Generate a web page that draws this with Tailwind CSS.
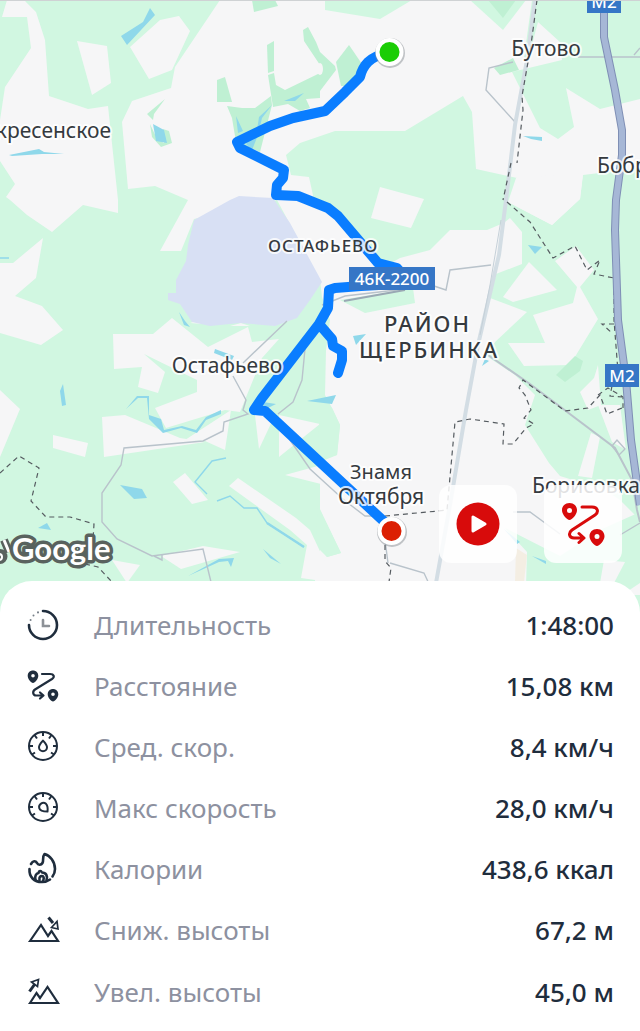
<!DOCTYPE html>
<html lang="ru">
<head>
    <meta charset="UTF-8">
    <meta name="viewport" content="width=device-width, initial-scale=1.0">
    <title>Тренировка</title>
    <script src="https://cdn.jsdelivr.net/npm/@tailwindcss/browser@4"></script>
</head>
<body class="flex min-h-screen flex-col bg-white font-['Noto_Sans','Open_Sans',sans-serif] text-[#1f2d3d]">

    <!-- Map -->
    <main class="relative border-t border-[#cfd2d4]">
        <svg class="block h-auto w-full" viewBox="0 1 640 620" role="img" aria-label="Карта маршрута">
            <rect width="640" height="622" fill="#d1f7e1"/>

            <!-- Open land -->
            <g fill="#f6f6f7">
                <path d="M7 0H24L36 12 45 40 49 96 88 109 108 106 118 200V213L83 205 52 232 27 215 10 200 6 197 15 184 0 161V120L5 87 31 48 27 17H2z"/>
                <path d="M77 41 107 46 111 83 92 95z"/>
                <path d="M130 47 160 20 179 16 190 31 172 70 149 79z"/>
                <path d="M220 0 175 67 171 88 132 101 122 122 128 189 155 186 188 200 160 251H181L194 219 277 200 320 280 322 297 330 320 326 350 325 395 332 408 340 425 337 455 320 462V510L341 553 327 557 320 550V622H640V0z"/>
                <path d="M43 238 36 278 15 296 42 306 63 330 41 345 0 333V263L13 263z"/>
                <path d="M113 334H153L172 318 208 347 248 327 252 342 279 339 262 358 240 412 225 410 166 428 155 408 197 392V380L144 354 165 372 158 393 138 387 142 367 114 369z"/>
                <path d="M190 323 200 320 203 324zM230 326 241 323 250 326zM272 326 278 320 289 321z"/>
                <path d="M0 390 20 409 0 457z"/>
                <path d="M102 417 125 415 180 438 205 442 104 457z"/>
                <path d="M53 435 88 443 85 457 53 448z"/>
                <path d="M231 410 225 450 205 441 185 440z"/>
                <path d="M255 415H275L259 449z"/>
                <path d="M279 415 320 424 300 440 279 457z"/>
                <path d="M285 475 325 464V485z"/>
                <path d="M185 473 173 482 192 504 208 500z"/>
                <path d="M238 478 296 518 310 530 325 562V622H315V580L301 578 307 545 290 530 229 486z"/>
                <path d="M203 546 240 552 181 569 161 556z"/>
                <path d="M112 560 140 565 127 583z"/>
            </g>

            <!-- Woods -->
            <g fill="#d1f7e1">
                <path d="M325 0H412L380 19 325 10z"/>
                <path d="M470 0H526L503 30z"/>
                <path d="M532 0H640V99L600 109 566 88 574 127 558 139 540 128 512 72 562 60 560 42 538 22 528 60 524 58z"/>
                <path d="M286 155 300 143 335 131H405L463 96 472 112 476 169 517 178 506 222 487 230H450L430 250 400 258 386 266 362 248 330 205 314 200 309 177 291 175z"/>
                <path d="M516 178 504 200 552 225 580 199 583 175 640 168V520L620 500 605 490 560 476 549 463 525 425 535 395 515 375 485 355 495 342 490 298 496 274 500 228z"/>
                <path d="M340 300 413 288 415 303 365 313z"/>
                <path d="M505 528 560 556 600 530 640 512V622H525L527 552z"/>
                <path d="M320 400 332 408 340 425 337 455 318 460z"/>
                <path d="M318 505 341 553 327 557 316 540z"/>
            </g>
            <g fill="#f6f6f7">
                <path d="M380 187 424 199 411 228 371 218z"/>
                <path d="M516 178 583 173 580 199 552 225 508 202z"/>
                <path d="M500 226 510 218 522 232V264L496 274 490 298 527 312 495 342 484 356 470 340 485 260z"/>
                <path d="M529 262 503 297 513 302 557 290z"/>
                <path d="M555 261 576 246 594 270 580 287 598 319 570 365 524 366 508 343H545L533 315 573 303 577 287z"/>
                <path d="M598 365 594 378 580 392 588 410 601 405z"/>
                <path d="M591 433 600 437 592 478 578 476z"/>
                <path d="M598 405 620 405 626 450 612 442z"/>
                <path d="M604 560 625 562 614 583H600z"/>
                <path d="M640 583 622 595H640z"/>
            </g>
            <path d="M516 548 527 555 524 582H515z" fill="#f4eee3"/>

            <!-- Parks -->
            <g fill="#bff0d3">
                <path d="M252 0H275L278 6 254 12z"/>
                <path d="M488 0H516L503 18z"/>
                <path d="M267 45 274 41V71L268 73z"/>
                <path d="M268 75 274 73 276 85 285 90 320 73V98L306 99 310 108 300 111 288 104 273 107z"/>
                <path d="M303 30 308 27 316 42 320 52 335 66 336 70 320 91V65L304 41z"/>
                <path d="M217 80 225 77 232 102H217z"/>
                <path d="M227 106 242 108H255L271 96 272 105 260 152 236 142 232 118z"/>
                <path d="M165 99 153 109 147 114 153 120 154 114z"/>
                <path d="M150 124 152 137 161 147 172 143 169 131 163 129 164 143 157 139z"/>
                <path d="M336 62 349 45 362 64 358 75 346 86 341 86z"/>
                <path d="M494 68 513 58 519 70 500 75z"/>
                <path d="M575 356 583 361 580 371 565 382 556 375z"/>
            </g>
            <ellipse cx="320" cy="69" rx="3" ry="6" fill="#f6f6f7"/>

            <!-- Airfield -->
            <path d="M230 200 239 196 273 198 290 223 322 282 310 300 297 318 275 326 240 323 210 326 192 322 180 304 168 300V293H176V280L186 261 188 245 194 220z" fill="#d8e0f4"/>

            <!-- Water -->
            <g fill="#8fd8ea">
                <path d="M150 8 155 15 127 45 121 36 143 22z"/>
                <path d="M9 155 39 149 44 152 64 154 42 154 12 156z"/>
                <path d="M153 124 164 130 167 143 156 141z"/>
                <path d="M272 105 259 117 257 130 246 144 252 150 258 135 262 118z"/>
                <path d="M236 116 243 131 238 133z"/>
                <path d="M284 101 304 93 295 101z"/>
                <path d="M523 136 542 137V141L531 139z"/>
                <path d="M528 245 542 247 535 254z"/>
                <path d="M353 336 366 334 356 345z"/>
                <path d="M482 366 485 359 489 361z"/>
                <path d="M179 312 185 321 190 327 184 325z"/>
                <path d="M215 349 234 356 232 360 214 353z"/>
                <path d="M63 384 66 405 62 406 60 391z"/>
                <path d="M120 485 142 489 147 498 134 499z"/>
                <path d="M38 528 47 523 51 530z"/>
                <path d="M126 409 137 396 149 396V415L161 419 164 430 182 426 196 430 206 417 221 410V414L206 420 197 433 181 428 163 433 149 419 147 398 138 398z"/>
                <path d="M263 402 276 404 268 408 258 406z"/>
                <path d="M307 401 336 395 332 404z"/>
                <path d="M188 576 219 559 234 558 231 567 228 561 219 562z"/>
                <path d="M263 549 281 564 270 558z"/>
                <path d="M532 556 546 561V564z"/>
                <path d="M504 529 520 542 517 544z"/>
            </g>
            <path d="M0 258H9M226 458 212 461 195 482 207 494M217 501 230 496 244 508H257L267 523 304 547" fill="none" stroke="#8fd8ea" stroke-width="1.4"/>
            <path d="M267 523 304 547" stroke="#8fd8ea" stroke-width="2.4"/>

            <!-- Minor roads -->
            <g fill="none" stroke="#b9c3cb" stroke-width="1.4">
                <path d="M287 321 243 363M233 376 246 400 243 410 248 414 224 422 223 431 203 441 124 448 121 465 102 493V522L117 539 152 556 203 549 211 582"/>
                <path d="M154 556 162 560V555"/>
                <path d="M305 349 302 380 293 402 278 414M290 440 310 469 344 500 365 516H382"/>
                <path d="M322 305 345 296 405 289M425 283 446 290 450 270 491 265"/>
                <path d="M578 57H640M634 55 640 48M513 62 489 68 486 90 515 122"/>
                <path d="M488 355 530 384 615 448 632 480 637 510 640 522" stroke-width="2"/>
                <path d="M612 446 617 440 625 449 619 455z"/>
                <path d="M390 563 424 573 430 586M513 512H530L560 534M640 523 620 535M385 540 388 563"/>
            </g>
            <path d="M344 301 405 290" stroke="#9aa8b4" stroke-width="2"/>

            <!-- Railway -->
            <path d="M535 0 527 60 515 125 506 200 499 255 478 345 466 410 450 505 436 583" fill="none" stroke="#d3dde4" stroke-width="4"/>
            <path d="M501 220 490 285 480 335" fill="none" stroke="#c5d0d8" stroke-width="1"/>

            <!-- District borders -->
            <g fill="none" stroke="#555b60" stroke-width="1.2" stroke-dasharray="5 4">
                <path d="M537 0 531 45 522 96 523 110 517 163M511 163 503 200"/>
                <path d="M507 202 530 222 553 258 575 246 587 270 600 260 594 274 614 278V320L618 372"/>
                <path d="M614 324H602L612 333M612 386 610 396 622 397"/>
                <path d="M0 473 19 456 39 468 31 501 46 517 70 517 94 524 93 540M85 564 98 567 112 582"/>
                <path d="M385 516 438 511 447 510 455 422 470 419 504 424 503 444 513 444 526 428 534 424 524 418 531 410 525 395 519 388 523 380 565 411 588 408 600 395 607 414 622 408"/>
                <path d="M385 545 385 561 391 568 389 582"/>
                <path d="M598 395 608 388 623 397V408"/>
            </g>

            <!-- M2 motorway -->
            <path d="M604 10V37L615 90 622 130V155L616 200 615 230 618 320 626 380 631 440 640 505" fill="none" stroke="#7f8fb5" stroke-width="8"/>
            <path d="M604 10V37L615 90 622 130V155L616 200 615 230 618 320 626 380 631 440 640 505" fill="none" stroke="#a6b7d6" stroke-width="6"/>

            <!-- Track -->
            <path d="M389 52Q374 56 368 62T360 77L345 92 325 111 293 118 270 126 237 142 240 148 284 170 283 178 277 185 276 195 298 196 328 208 338 216 378 263 397 268Q404 275 396 284L361 286 335 288 329 290 328 308 319 324 332 339 333 346 342 351V360L338 373M319 324 262 398 254 410 265 411 391 528" fill="none" stroke="#0a7dff" stroke-width="10" stroke-linecap="round" stroke-linejoin="round"/>

            <!-- Road shields -->
            <g fill="#3676c6">
                <path d="M587 0H621V13H587zM349 267H435V290H349zM605 364H639V387H605z"/>
            </g>
            <g fill="#fff" font-size="17" font-weight="500" text-anchor="middle">
                <text x="604" y="8">М2</text>
                <text x="392" y="285">46К-2200</text>
                <text x="622" y="382">М2</text>
            </g>

            <!-- Place names -->
            <g fill="#353a3f" stroke="#fff" stroke-opacity=".8" stroke-width="4" stroke-linejoin="round" paint-order="stroke" font-size="21">
                <text x="111" y="138" text-anchor="end">кресенское</text>
                <text x="546" y="56" text-anchor="middle">Бутово</text>
                <text x="597" y="173">Бобры</text>
                <text x="227" y="373" text-anchor="middle">Остафьево</text>
                <text x="381" y="479" font-size="20" text-anchor="middle">Знамя</text>
                <text x="381" y="504" text-anchor="middle">Октября</text>
                <text x="532" y="493">Борисовка</text>
                <text x="268" y="252" font-size="17" font-weight="500" letter-spacing="1">ОСТАФЬЕВО</text>
                <text x="384" y="332" font-size="22" font-weight="500" letter-spacing="2">РАЙОН</text>
                <text x="359" y="358" font-size="22" font-weight="500" letter-spacing="2">ЩЕРБИНКА</text>
            </g>

            <!-- Start and finish -->
            <g stroke="#fff" stroke-width="4">
                <circle cx="390" cy="53" r="15" fill="#8a9095" fill-opacity=".5" stroke="none"/>
                <circle cx="392" cy="532" r="15" fill="#8a9095" fill-opacity=".5" stroke="none"/>
                <circle cx="389.500" cy="52" r="12" fill="#1bcd05"/>
                <circle cx="391.500" cy="531" r="12" fill="#dc1f03"/>
            </g>

            <!-- Map attribution -->
            <g fill="#fff" stroke="#59625e" stroke-width="7" stroke-linejoin="round" paint-order="stroke">
                <path d="M4 540 9 552M0 553A3 3 0 0 1 0 560" fill="none" stroke-width="8"/>
                <path d="M4 540 9 552" fill="none" stroke="#fff" stroke-width="3"/>
                <path d="M-1 554A3 3 0 0 1 -1 560" fill="none" stroke="#fff" stroke-width="2"/>
                <text x="12" y="560" font-family="Lato, sans-serif" font-weight="700" font-size="31">Google</text>
            </g>
        </svg>

        <div class="absolute right-[18px] bottom-[58px] flex gap-[27px]">
            <button type="button" aria-label="Воспроизвести маршрут" class="flex size-[78px] items-center justify-center rounded-xl bg-white/85">
                <svg class="size-11" viewBox="0 0 44 44">
                    <circle cx="22" cy="22" r="21.500" fill="#d80b0b"/>
                    <path d="M17 15V29L29 22z" fill="#fff" stroke="#fff" stroke-width="3" stroke-linejoin="round"/>
                </svg>
            </button>
            <button type="button" aria-label="Показать маршрут" class="flex size-[78px] items-center justify-center rounded-xl bg-white/85">
                <svg class="size-11" viewBox="0 0 44 44">
                    <g fill="#d80b0b" fill-rule="evenodd">
                        <path d="M8.500 1C4 1 1 4.200 1 8.200 1 12.500 6 18 8.500 18S16 12.500 16 8.200C16 4.200 13 1 8.500 1zM8.500 6A2.500 2.500 0 1 1 8.500 11 2.500 2.500 0 0 1 8.500 6z"/>
                        <path d="M36 27C31.500 27 28.500 30.200 28.500 34.200 28.500 38.500 33.500 44 36 44S43.500 38.500 43.500 34.200C43.500 30.200 40.500 27 36 27zM36 32A2.500 2.500 0 1 1 36 37 2.500 2.500 0 0 1 36 32z"/>
                    </g>
                    <path d="M21 5H31C37 5 38 10 34 13L11 28C7 31 8 36 13 36H22M18 31.500 23 36 18 40.500" fill="none" stroke="#d80b0b" stroke-width="3" stroke-linecap="round" stroke-linejoin="round"/>
                </svg>
            </button>
        </div>
    </main>

    <!-- Workout summary -->
    <section class="relative -mt-10 grow rounded-t-[32px] bg-white px-[26px] pt-[13px] pb-1">
        <dl class="text-[26px] leading-[34px]">
            <div class="flex h-[61px] items-center">
                <dt class="flex grow items-center gap-[34px] text-[#8d91a0]">
                    <svg class="size-[34px]" viewBox="0 0 34 34" fill="none" stroke="#1f2d3d" stroke-linecap="round">
                        <path d="M17 3A14 14 0 1 1 3 17" stroke-width="2.600"/>
                        <path d="M4.600 12V12.100M7.500 7.500V7.600M12 4.300V4.400" stroke="#777f88" stroke-width="2"/>
                        <path d="M17 12V18H23" stroke="#8d9197" stroke-width="2.600"/>
                    </svg>
                    Длительность
                </dt>
                <dd class="font-medium">1:48:00</dd>
            </div>
            <div class="flex h-[61px] items-center">
                <dt class="flex grow items-center gap-[34px] text-[#8d91a0]">
                    <svg class="size-[34px]" viewBox="0 0 34 34">
                        <g fill="#1f2d3d" fill-rule="evenodd">
                            <path d="M7 1.500C4 1.500 1.700 3.600 1.700 6.800S5 14 7 14 12.300 10 12.300 6.800 10 1.500 7 1.500zM7 5A1.800 1.800 0 1 1 7 8.600 1.800 1.800 0 0 1 7 5z"/>
                            <path d="M27 20C24 20 21.700 22.100 21.700 25.300S25 32.500 27 32.500 32.300 28.500 32.300 25.300 30 20 27 20zM27 23.500A1.800 1.800 0 1 1 27 27.100 1.800 1.800 0 0 1 27 23.500z"/>
                        </g>
                        <path d="M16 5H24C28 5 29 8 26 10L9 20.500C6 22.500 7 26.500 10 26.500H17M14 23.500 17.500 26.500 14 29.500" fill="none" stroke="#1f2d3d" stroke-width="2.200" stroke-linecap="round" stroke-linejoin="round"/>
                    </svg>
                    Расстояние
                </dt>
                <dd class="font-medium">15,08 км</dd>
            </div>
            <div class="flex h-[61px] items-center">
                <dt class="flex grow items-center gap-[34px] text-[#8d91a0]">
                    <svg class="size-[34px]" viewBox="0 0 34 34" fill="none" stroke="#1f2d3d" stroke-width="2" stroke-linejoin="round">
                        <circle cx="17" cy="16" r="14"/>
                        <path d="M17 2V6M3 16H7M31 16H27M8.500 5 11 8.500M25.500 5 23 8.500M6 24.500 9 22.500M28 24.500 25 22.500"/>
                        <path d="M17 10.500C15 13 13 15 13 17.200A4 4 0 0 0 21 17.200C21 15 19 13 17 10.500z"/>
                    </svg>
                    Сред. скор.
                </dt>
                <dd class="font-medium">8,4 км/ч</dd>
            </div>
            <div class="flex h-[61px] items-center">
                <dt class="flex grow items-center gap-[34px] text-[#8d91a0]">
                    <svg class="size-[34px]" viewBox="0 0 34 34" fill="none" stroke="#1f2d3d" stroke-width="2" stroke-linejoin="round">
                        <circle cx="17" cy="16" r="14"/>
                        <path d="M17 2V6M3 16H7M31 16H27M8.500 5 11 8.500M25.500 5 23 8.500M6 24.500 9 22.500M28 24.500 25 22.500"/>
                        <path d="M21.500 20.500C22 17 21.500 14.500 20 12.800A4.200 4.200 0 0 0 13.300 17.200C14 20 17.500 20.500 21.500 20.500z"/>
                    </svg>
                    Макс скорость
                </dt>
                <dd class="font-medium">28,0 км/ч</dd>
            </div>
            <div class="flex h-[61px] items-center">
                <dt class="flex grow items-center gap-[34px] text-[#8d91a0]">
                    <svg class="size-[34px]" viewBox="0 0 34 34" fill="none" stroke="#1f2d3d" stroke-width="2.600" stroke-linecap="round" stroke-linejoin="round">
                        <path d="M5 12C7 8.500 9.500 8.500 11 11C12 13 15 13.500 16.500 11C18 8 16 5 18.500 2C24 3.500 29 9.500 29 17C29 20 28 22.500 26.500 24.500"/>
                        <path d="M3.500 17C3 25 8 30 16 30C19 30 22 29 24 27.500"/>
                        <path d="M9.500 28C8.500 24 10 21.500 12.500 21C13 18.500 15 18.500 16 20.500C20 20.500 22 24 20.500 28M13.500 28C13 25 14.500 24 16 24S18.500 26 17 29"/>
                    </svg>
                    Калории
                </dt>
                <dd class="font-medium">438,6 ккал</dd>
            </div>
            <div class="flex h-[62px] items-center">
                <dt class="flex grow items-center gap-[34px] text-[#8d91a0]">
                    <svg class="size-[34px]" viewBox="0 0 34 34" fill="none" stroke="#1f2d3d" stroke-width="2.200">
                        <path d="M4 28 15 12 22 23 25.500 18 32 28z"/>
                        <path d="M22.500 4.500 27 10" stroke-width="3"/>
                        <path d="M25.500 14.500 31 8.500 32 16z" stroke-width="1.700"/>
                    </svg>
                    Сниж. высоты
                </dt>
                <dd class="font-medium">67,2 м</dd>
            </div>
            <div class="flex h-[62px] items-center">
                <dt class="flex grow items-center gap-[34px] text-[#8d91a0]">
                    <svg class="size-[34px]" viewBox="0 0 34 34" fill="none" stroke="#1f2d3d" stroke-width="2.200">
                        <path d="M4 28 10.500 18 14 23 21.500 12 32 28z"/>
                        <path d="M3.500 16.500 8.500 9.500" stroke-width="3"/>
                        <path d="M5.500 7 12.500 4.500 11.500 11.500z" stroke-width="1.700"/>
                    </svg>
                    Увел. высоты
                </dt>
                <dd class="font-medium">45,0 м</dd>
            </div>
        </dl>
    </section>

</body>
</html>
